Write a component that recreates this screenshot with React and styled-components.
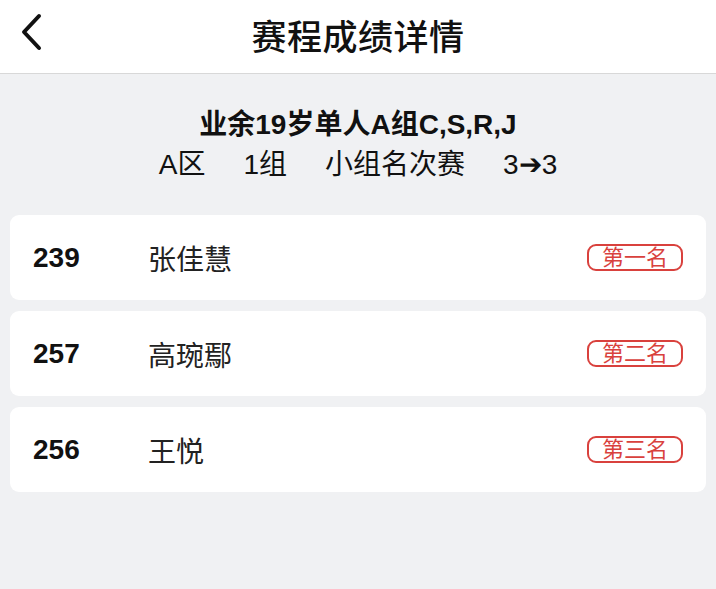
import React from 'react';
import styled, { createGlobalStyle } from 'styled-components';

const GlobalStyle = createGlobalStyle`
  html, body {
    margin: 0;
    padding: 0;
    background: #f0f1f3;
    font-family: "Liberation Sans", Arial, "Noto Sans CJK SC", sans-serif;
  }
`;

const Page = styled.div`
  width: 716px;
  min-height: 589px;
  background: #f0f1f3;
`;

const Header = styled.header`
  height: 73px;
  background: #fff;
  border-bottom: 1px solid #d8d8d8;
  display: flex;
  align-items: center;
  justify-content: center;
  position: relative;
`;

const BackButton = styled.button`
  position: absolute;
  left: 14px;
  top: 12px;
  width: 34px;
  height: 40px;
  padding: 0;
  border: none;
  background: none;
  display: flex;
  align-items: center;
  justify-content: center;
`;

const Title = styled.h1`
  margin: 0 0 4px;
  font-size: 35px;
  font-weight: 500;
  color: #111;
  letter-spacing: 0.5px;
`;

const Summary = styled.section`
  padding-top: 31px;
  padding-bottom: 30px;
  display: flex;
  flex-direction: column;
  align-items: center;
  color: #111;
`;

const EventName = styled.div`
  font-size: 28px;
  font-weight: 700;
  line-height: 40px;
`;

const EventMeta = styled.div`
  font-size: 28px;
  line-height: 40px;
  display: flex;
  gap: 38px;
`;

const List = styled.div`
  display: flex;
  flex-direction: column;
  gap: 11px;
  padding: 0 10px;
`;

const Card = styled.div`
  height: 85px;
  background: #fff;
  border-radius: 9px;
  display: flex;
  align-items: center;
  padding: 0 23px;
`;

const Number = styled.span`
  width: 115px;
  font-size: 28px;
  font-weight: 700;
  color: #111;
`;

const Name = styled.span`
  flex: 1;
  font-size: 28px;
  color: #222;
`;

const Badge = styled.span`
  border: 2px solid #d9413d;
  border-radius: 9px;
  color: #d9413d;
  font-size: 22px;
  line-height: 23px;
  padding: 0 13px;
`;

const players = [
  { num: '239', name: '张佳慧', rank: '第一名' },
  { num: '257', name: '高琬鄢', rank: '第二名' },
  { num: '256', name: '王悦', rank: '第三名' },
];

function App() {
  return (
    <Page>
      <GlobalStyle />
      <Header>
        <BackButton>
          <svg width="26" height="38" viewBox="0 0 26 38">
            <path d="M21 3 L6 19 L21 35" fill="none" stroke="#111" strokeWidth="4" strokeLinecap="round" strokeLinejoin="round" />
          </svg>
        </BackButton>
        <Title>赛程成绩详情</Title>
      </Header>
      <Summary>
        <EventName>业余19岁单人A组C,S,R,J</EventName>
        <EventMeta>
          <span>A区</span>
          <span>1组</span>
          <span>小组名次赛</span>
          <span>3➔3</span>
        </EventMeta>
      </Summary>
      <List>
        {players.map((p) => (
          <Card key={p.num}>
            <Number>{p.num}</Number>
            <Name>{p.name}</Name>
            <Badge>{p.rank}</Badge>
          </Card>
        ))}
      </List>
    </Page>
  );
}

export default App;
